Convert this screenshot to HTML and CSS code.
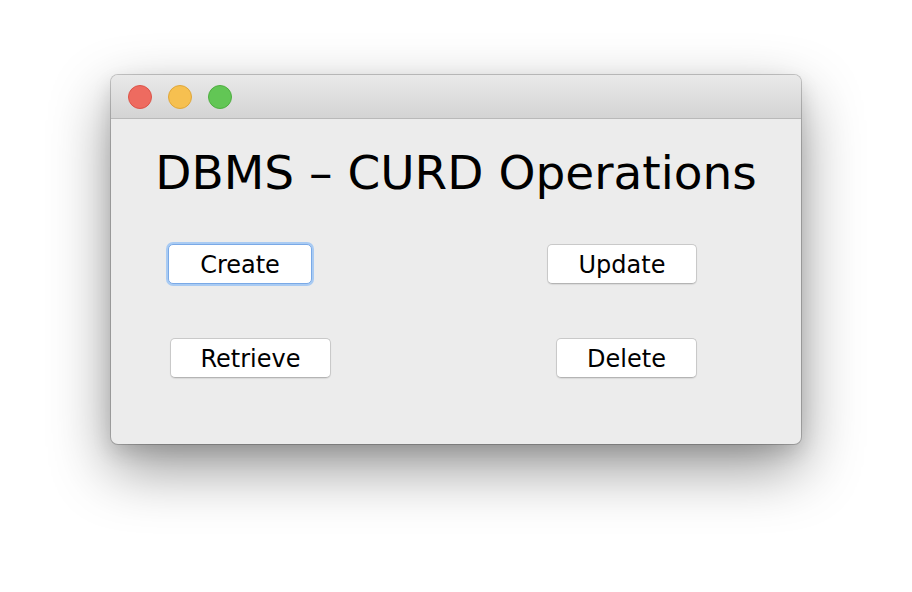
FILE: index.html
```html
<!DOCTYPE html>
<html>
<head>
<meta charset="utf-8">
<link rel="stylesheet" href="styles.css">
</head>
<body>
<div class="stage">
  <div class="window">
    <div class="titlebar">
      <span class="light red"></span>
      <span class="light yellow"></span>
      <span class="light green"></span>
    </div>
    <div class="content">
      <h1 class="title">DBMS – CURD Operations</h1>
      <div class="buttons">
        <div class="row">
          <button class="btn btn-create focused">Create</button>
          <button class="btn btn-update">Update</button>
        </div>
        <div class="row">
          <button class="btn btn-retrieve">Retrieve</button>
          <button class="btn btn-delete">Delete</button>
        </div>
      </div>
    </div>
  </div>
</div>
</body>
</html>
```
FILE: styles.css
```css
html, body {
  margin: 0;
  padding: 0;
  background: #ffffff;
}
.stage {
  width: 912px;
  height: 592px;
  padding: 75px 0 0 111px;
  box-sizing: border-box;
}
.window {
  width: 690px;
  height: 369px;
  background: #ececec;
  border-radius: 7px;
  box-shadow: 0 0 0 1px rgba(0,0,0,0.2), 0 24px 60px rgba(0,0,0,0.42), 0 8px 20px rgba(0,0,0,0.12);
  overflow: hidden;
  display: flex;
  flex-direction: column;
}
.titlebar {
  height: 43px;
  flex: none;
  background: linear-gradient(#e9e9e9, #d4d4d4);
  border-bottom: 1px solid #b9b9b9;
  display: flex;
  align-items: center;
  padding-left: 17px;
  gap: 16px;
}
.light {
  width: 24px;
  height: 24px;
  border-radius: 50%;
  box-sizing: border-box;
}
.red { background: #ee6b60; border: 1px solid #dc5449; }
.yellow { background: #f6c050; border: 1px solid #e0a73a; }
.green { background: #62c655; border: 1px solid #4fae41; }
.content {
  flex: 1;
  display: flex;
  flex-direction: column;
}
.title {
  margin: 24px 0 0 0;
  text-align: center;
  font-family: "DejaVu Sans", sans-serif;
  font-weight: normal;
  font-size: 47px;
  line-height: 60px;
  color: #000;
}
.buttons {
  margin-top: 41px;
  padding: 0 104px 0 57px;
  display: flex;
  flex-direction: column;
  gap: 54px;
}
.row {
  display: flex;
  justify-content: space-between;
  align-items: center;
}
.btn {
  height: 40px;
  background: #ffffff;
  border: 1px solid #c9c9c9;
  border-bottom-color: #b4b4b4;
  border-radius: 5px;
  box-shadow: 0 1px 1px rgba(0,0,0,0.08);
  font-family: "DejaVu Sans", sans-serif;
  font-size: 24px;
  color: #000;
  padding: 2px 0 0 0;
}
.btn-create { width: 144px; }
.btn-update { width: 150px; }
.btn-retrieve { width: 161px; margin-left: 2px; }
.btn-delete { width: 141px; }
.focused {
  border: 1px solid #7aa9e6;
  box-shadow: 0 0 0 2px #a9cbf3;
}
```
